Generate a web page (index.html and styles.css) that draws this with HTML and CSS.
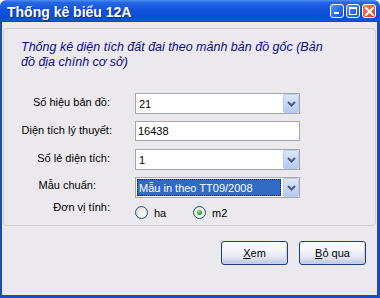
FILE: index.html
```html
<!DOCTYPE html>
<html lang="vi">
<head>
    <meta charset="UTF-8">
    <meta name="viewport" content="width=device-width, initial-scale=1.0">
    <title>Thống kê biểu 12A</title>
    <link rel="stylesheet" href="styles.css">
</head>
<body>
    <div class="window">
        <div class="titlebar">
            <span class="title">Thống kê biểu 12A</span>
            <div class="caption-buttons">
                <span class="cap-btn cap-min"><span class="min-bar"></span></span>
                <span class="cap-btn cap-max"><span class="max-box"></span></span>
                <span class="cap-btn cap-close">
                    <svg width="9" height="9" viewBox="0 0 9 9"><path d="M1 1 L8 8 M8 1 L1 8" stroke="#fff" stroke-width="2" stroke-linecap="square"/></svg>
                </span>
            </div>
        </div>

        <div class="body">
            <div class="groupbox">
                <p class="intro">Thống kê diện tích đất đai theo mảnh bản đồ gốc (Bản<br>đồ địa chính cơ sở)</p>

                <div class="form">
                    <label class="lbl">Số hiệu bản đồ:</label>
                    <div class="combo">
                        <span class="combo-text">21</span>
                        <span class="combo-btn"><svg width="9" height="6" viewBox="0 0 9 6"><path d="M1 1 L4.5 4.5 L8 1" fill="none" stroke="#4d5b78" stroke-width="2"/></svg></span>
                    </div>

                    <label class="lbl lbl-wide">Diện tích lý thuyết:</label>
                    <div class="textbox">16438</div>

                    <label class="lbl">Số lẻ diện tích:</label>
                    <div class="combo">
                        <span class="combo-text">1</span>
                        <span class="combo-btn"><svg width="9" height="6" viewBox="0 0 9 6"><path d="M1 1 L4.5 4.5 L8 1" fill="none" stroke="#4d5b78" stroke-width="2"/></svg></span>
                    </div>

                    <label class="lbl lbl-short">Mẫu chuẩn:</label>
                    <div class="combo">
                        <span class="combo-text selected">Mẫu in theo TT09/2008</span>
                        <span class="combo-btn"><svg width="9" height="6" viewBox="0 0 9 6"><path d="M1 1 L4.5 4.5 L8 1" fill="none" stroke="#4d5b78" stroke-width="2"/></svg></span>
                    </div>

                    <label class="lbl lbl-top">Đơn vị tính:</label>
                    <div class="radios">
                        <span class="radio-opt"><span class="radio"></span>ha</span>
                        <span class="radio-opt"><span class="radio checked"></span>m2</span>
                    </div>
                </div>
            </div>

            <div class="actions">
                <button class="btn"><u>X</u>em</button>
                <button class="btn"><u>B</u>ỏ qua</button>
            </div>
        </div>
    </div>
</body>
</html>
```

FILE: styles.css
```css
* {
    margin: 0;
    padding: 0;
    box-sizing: border-box;
}

body {
    font-family: 'Liberation Sans', Arial, sans-serif;
    font-size: 11px;
    color: #000;
    background: #fff;
}

.window {
    width: 380px;
    height: 298px;
    display: flex;
    flex-direction: column;
}

/* title bar */
.titlebar {
    height: 22px;
    display: flex;
    align-items: center;
    justify-content: space-between;
    padding: 0 4px 0 7px;
    background: linear-gradient(to bottom, #4a8df5 0%, #2766e3 12%, #1153dc 45%, #0c4cd6 80%, #1555d8 92%, #0a3fbd 100%);
    border-radius: 6px 6px 0 0;
}

.title {
    font-size: 14px;
    font-weight: bold;
    color: #fff;
    text-shadow: 1px 1px 0 #0b2a8f;
    padding-top: 1px;
}

.caption-buttons {
    display: flex;
    gap: 2px;
}

.cap-btn {
    width: 14px;
    height: 14px;
    border: 1px solid #fff;
    border-radius: 3px;
    display: flex;
    align-items: center;
    justify-content: center;
    position: relative;
}

.cap-min,
.cap-max {
    background: linear-gradient(135deg, #5b95f7 0%, #2a66e4 60%, #2158d4 100%);
}

.cap-close {
    background: linear-gradient(135deg, #f08a62 0%, #e05a2c 60%, #c8431c 100%);
}

.min-bar {
    position: absolute;
    left: 3px;
    bottom: 3px;
    width: 5px;
    height: 2px;
    background: #fff;
}

.max-box {
    width: 8px;
    height: 8px;
    border: 1px solid #fff;
    border-top-width: 2px;
}

/* window body */
.body {
    flex: 1;
    background: #ebe9ed;
    border-style: solid;
    border-color: #1c4ac6;
    border-width: 0 3px 3px 2px;
}

.groupbox {
    margin: 6px 1px 0 1px;
    height: 198px;
    border: 1px solid #d2d0c8;
    border-radius: 4px;
}

.intro {
    margin: 11px 0 0 17px;
    font-size: 12.5px;
    font-style: italic;
    line-height: 15px;
    color: #0c0c86;
}

.form {
    margin-top: 23px;
    display: grid;
    grid-template-columns: 108px 165px;
    grid-template-rows: repeat(4, 21px) 15px;
    column-gap: 23px;
    row-gap: 7px;
    align-items: center;
}

.lbl {
    text-align: right;
    padding-right: 2px;
    padding-bottom: 3px;
}

.lbl-wide {
    padding-right: 0;
}

.lbl-short {
    padding-right: 16px;
    padding-bottom: 5px;
}

.lbl-top {
    align-self: start;
    padding-bottom: 0;
    margin-top: -4px;
}

.combo,
.textbox {
    height: 21px;
    background: #fff;
    border: 1px solid #a7a6aa;
    display: flex;
    align-items: center;
}

.textbox {
    height: 20px;
    padding-left: 2px;
    align-self: start;
    font-size: 11px;
}

.combo-text {
    flex: 1;
    padding-left: 3px;
    font-size: 11px;
}

.combo-text.selected {
    align-self: stretch;
    margin: 1px 2px 1px 1px;
    padding-left: 1px;
    display: flex;
    align-items: center;
    background: #316ac5;
    color: #fff;
    border: 1px dotted #1a1a1a;
}

.combo-btn {
    width: 16px;
    height: 19px;
    border: 1px solid #b8c9ec;
    border-radius: 2px;
    background: linear-gradient(to bottom, #dde7fb 0%, #c8d8f7 50%, #b5c8f1 100%);
    display: flex;
    align-items: center;
    justify-content: center;
}

/* unit radios */
.radios {
    display: flex;
    align-items: center;
    height: 15px;
}

.radio-opt {
    width: 58px;
    display: inline-flex;
    align-items: center;
    gap: 6px;
    font-size: 11px;
}

.radio {
    width: 13px;
    height: 13px;
    border-radius: 50%;
    border: 1px solid #1d5281;
    background: radial-gradient(circle at 65% 65%, #ffffff 0%, #f0efea 40%, #cfcec6 100%);
    display: flex;
    align-items: center;
    justify-content: center;
}

.radio.checked::after {
    content: "";
    width: 5px;
    height: 5px;
    border-radius: 50%;
    background: radial-gradient(circle at 35% 35%, #7fe07f 0%, #21a121 70%, #14801a 100%);
}

/* dialog buttons */
.actions {
    display: flex;
    justify-content: flex-end;
    gap: 11px;
    padding-right: 11px;
    margin-top: 15px;
}

.btn {
    width: 67px;
    height: 24px;
    border: 1px solid #1e3f78;
    border-radius: 3px;
    background: linear-gradient(to bottom, #ffffff 0%, #f5f6fa 35%, #e2e6f0 70%, #b9c4de 100%);
    box-shadow: inset -1px -1px 0 #c9d1e6;
    font-family: 'Liberation Sans', Arial, sans-serif;
    font-size: 11px;
    color: #000;
}
```
